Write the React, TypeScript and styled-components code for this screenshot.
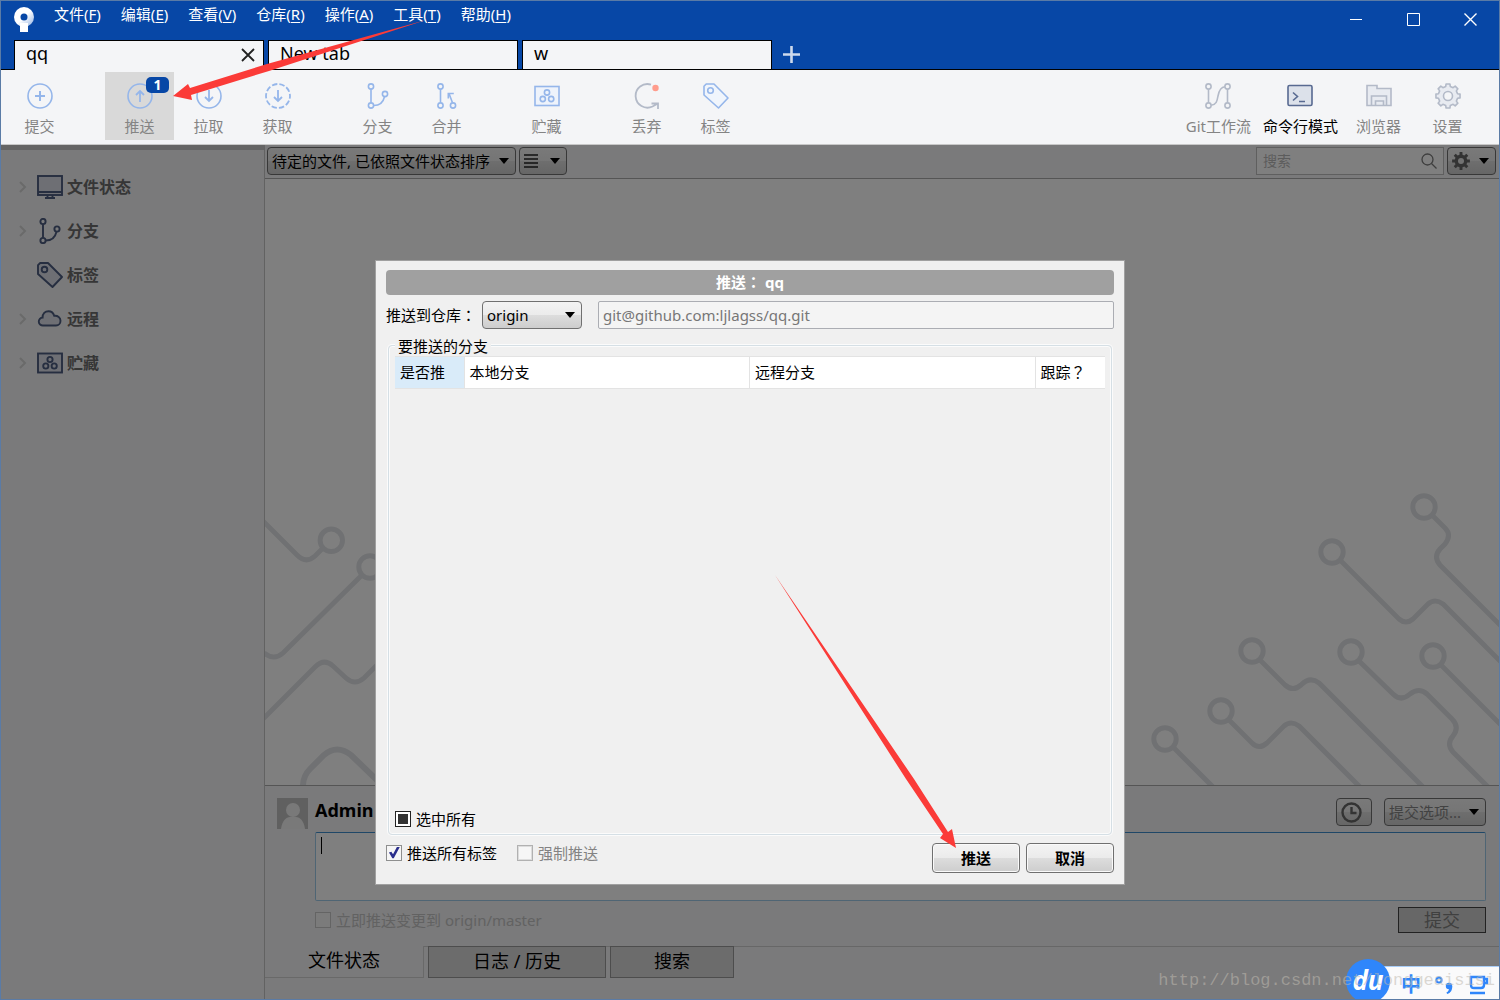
import React, { useEffect, useRef } from "react";
import styled, { createGlobalStyle, css } from "styled-components";

const UI_FONT = `"Noto Sans", "Noto Sans CJK SC", sans-serif`;
const BLUE = "#0747a6";
const PANEL = "#f4f5f7";
const bevel = "linear-gradient(#f3f3f3 0%, #ebebeb 50%, #dddddd 50%, #cdcdcd 100%)";

const GlobalStyle = createGlobalStyle`
  *, *::before, *::after { box-sizing: border-box; }
  body { margin: 0; font-family: ${UI_FONT}; font-size: 15px; line-height: 20px; color: #000; }
  button, input, select, textarea { font: inherit; color: inherit; margin: 0; }
  button { padding: 0; border: 0; background: none; }
  svg { display: block; flex: none; }
`;

const Window = styled.div`
  position: relative;
  display: flex;
  flex-direction: column;
  min-height: 100vh;
  border: 1px solid #5a7ba6;
  background: ${PANEL};
  overflow: hidden;
`;

/* ---------- title bar ---------- */

const TitleBar = styled.header`
  background: ${BLUE};
  color: #fff;
`;

const TitleRow = styled.div`
  display: flex;
  align-items: flex-start;
  height: 39px;
  padding-left: 12px;
`;

const LogoBox = styled.div`
  width: 41px;
  padding-top: 5px;
`;

const MenuBar = styled.nav`
  display: flex;
  flex: 1;
  gap: 20px;
  padding-top: 3px;
`;

const MenuButton = styled.button`
  line-height: 20px;
  white-space: nowrap;
  u { text-underline-offset: 2px; }
`;

const WindowButton = styled.button`
  display: grid;
  place-items: center;
  width: 57px;
  height: 36px;
`;

const TabRow = styled.div`
  display: flex;
  gap: 4px;
  height: 30px;
  padding-left: 13px;
  border-bottom: 1px solid #000;
`;

const Tab = styled.div<{ $active?: boolean }>`
  display: flex;
  align-items: flex-start;
  justify-content: space-between;
  width: 250px;
  margin-bottom: ${(p) => (p.$active ? "-1px" : "0")};
  padding: 0 8px 0 11px;
  border: 1px solid #000;
  border-bottom: 0;
  background: ${PANEL};
  color: #000;
`;

const TabLabel = styled.button`
  font-size: 18px;
  line-height: 24px;
`;

const TabClose = styled.button`
  display: grid;
  place-items: center;
  width: 14px;
  height: 28px;
`;

const AddTab = styled.button`
  display: grid;
  place-items: center;
  width: 30px;
`;

/* ---------- toolbar ---------- */

const Toolbar = styled.div`
  display: flex;
  justify-content: space-between;
  padding: 2px 17px 4px 4px;
  border-bottom: 1px solid #c8c8c8;
  background: ${PANEL};
`;

const ToolSections = styled.div`
  display: flex;
  gap: 31px;
`;

const ToolGroup = styled.div`
  display: flex;
`;

const ToolButton = styled.button<{ $hot?: boolean; $strong?: boolean }>`
  position: relative;
  display: flex;
  flex-direction: column;
  align-items: center;
  gap: 7px;
  min-width: 69px;
  padding: 11px 6px 4px;
  background: ${(p) => (p.$hot ? "#d9d9d9" : "transparent")};
  color: ${(p) => (p.$strong ? "#000" : "#848484")};
  white-space: nowrap;
`;

const Badge = styled.span`
  position: absolute;
  top: 5px;
  right: 5px;
  width: 23px;
  border-radius: 5px;
  background: ${BLUE};
  color: #fff;
  font-size: 14px;
  font-weight: 700;
  line-height: 16px;
  text-align: center;
`;

/* ---------- body ---------- */

const Body = styled.div`
  position: relative;
  display: flex;
  flex: 1;
`;

const Sidebar = styled.aside`
  width: 264px;
  padding-top: 15px;
  border-top: 5px solid #cacaca;
  border-right: 1px solid #c4c4c4;
`;

const SideItem = styled.button`
  display: flex;
  align-items: center;
  width: 100%;
  height: 44px;
  padding-left: 17px;
  color: #6c6c6c;
  font-size: 16px;
  font-weight: 700;
`;

const SideArrow = styled.span<{ $hidden?: boolean }>`
  width: 19px;
  visibility: ${(p) => (p.$hidden ? "hidden" : "visible")};
`;

const SideIcon = styled.span`
  width: 30px;
`;

const Main = styled.main`
  display: flex;
  flex: 1;
  flex-direction: column;
  min-width: 0;
`;

const FilterBar = styled.div`
  display: flex;
  align-items: flex-start;
  gap: 3px;
  height: 34px;
  padding: 2px 3px 0 2px;
  border-bottom: 1px solid #ababab;
`;

const Spacer = styled.div`
  flex: 1;
`;

const SelectBox = styled.div<{ $width: number; $muted?: boolean }>`
  display: grid;
  align-items: center;
  width: ${(p) => p.$width}px;
  color: ${(p) => (p.$muted ? "#858585" : "#000")};
  & > * { grid-area: 1 / 1; }
  & > svg { justify-self: end; margin-right: 7px; pointer-events: none; }
`;

const Select = styled.select`
  width: 100%;
  height: 28px;
  padding: 0 4px;
  border: 1px solid #707070;
  border-radius: 4px;
  background: ${bevel};
  appearance: none;
`;

const SmallButton = styled.button<{ $width: number }>`
  display: flex;
  align-items: center;
  justify-content: space-between;
  width: ${(p) => p.$width}px;
  height: 28px;
  padding: 0 6px 0 4px;
  border: 1px solid #707070;
  border-radius: 4px;
  background: ${bevel};
`;

const SearchBox = styled.label`
  display: flex;
  align-items: center;
  width: 188px;
  height: 28px;
  padding: 0 6px;
  border: 1px solid #bebebe;
  background: #fff;
`;

const SearchInput = styled.input`
  flex: 1;
  min-width: 0;
  padding: 0;
  border: 0;
  outline: 0;
  background: none;
  font-size: 14px;
  &::placeholder { color: #b8b8b8; opacity: 1; }
`;

const Canvas = styled.section`
  display: flex;
  flex: 1;
  align-items: flex-end;
  justify-content: space-between;
  background: #fff;
  overflow: hidden;
`;

const CommitPanel = styled.form`
  display: grid;
  grid-template-columns: 31px 1fr;
  column-gap: 7px;
  padding: 12px 13px 13px 12px;
  border-top: 1px solid #ababab;
`;

const CommitColumn = styled.div`
  display: flex;
  flex-direction: column;
  gap: 6px;
`;

const CommitHeader = styled.div`
  display: flex;
  align-items: flex-start;
  gap: 12px;
`;

const Author = styled.strong`
  flex: 1;
  font-size: 18px;
  line-height: 24px;
`;

const MessageWrap = styled.div`
  position: relative;
  display: flex;
`;

const Message = styled.textarea`
  width: 100%;
  height: 69px;
  padding: 2px 5px;
  border: 1px solid #9fcbe8;
  border-top-color: #3f8fce;
  border-radius: 2px;
  background: #fff;
  resize: none;
  outline: 0;
`;

const Caret = styled.i`
  position: absolute;
  left: 6px;
  top: 5px;
  width: 1px;
  height: 17px;
  background: #000;
`;

const CommitFooter = styled.div`
  display: flex;
  align-items: center;
  justify-content: space-between;
`;

const SubmitButton = styled.button`
  width: 88px;
  height: 26px;
  border: 1px solid #444;
  background: #cfcfcf;
  color: #808080;
  font-size: 18px;
`;

const ViewTabs = styled.div`
  display: flex;
  gap: 4px;
  height: 32px;
  margin-bottom: 21px;
  border-top: 1px solid #cfcfcf;
`;

const ViewTab = styled.button<{ $width: number; $active?: boolean }>`
  width: ${(p) => p.$width}px;
  margin-top: -1px;
  font-size: 18px;
  line-height: 24px;
  ${(p) =>
    p.$active
      ? css`
          padding-bottom: 4px;
          border: solid #d2d2d2;
          border-width: 0 1px 1px 0;
          background: ${PANEL};
        `
      : css`
          padding-bottom: 2px;
          border: 1px solid #9a9a9a;
          background: #d8d8d8;
        `}
`;

/* ---------- dialog ---------- */

const Shade = styled.div`
  position: absolute;
  inset: 0;
  display: grid;
  place-items: center;
  background: rgba(0, 0, 0, 0.5);
`;

const Dialog = styled.section`
  display: flex;
  flex-direction: column;
  width: 750px;
  max-width: 100%;
  padding: 9px 10px 11px;
  border: 1px solid #a0a0a0;
  background: #f0f0f0;
`;

const DialogTitle = styled.h2`
  margin: 0 0 6px;
  border-radius: 4px;
  background: #a0a0a0;
  color: #fff;
  font-size: 15px;
  font-weight: 700;
  line-height: 25px;
  text-align: center;
`;

/* full-width punctuation centred in its cell */
const Wide = styled.span`
  font-family: "Noto Sans CJK TC", sans-serif;
  line-height: 1;
`;

const RepoRow = styled.div`
  display: flex;
  align-items: center;
  margin-bottom: 8px;
`;

const RepoLabel = styled.label`
  width: 96px;
  white-space: nowrap;
`;

const UrlInput = styled.input`
  flex: 1;
  height: 28px;
  margin-left: 16px;
  padding: 0 4px;
  border: 1px solid #abadb3;
  border-radius: 2px;
  background: #f4f4f4;
  color: #777;
`;

const Branches = styled.fieldset`
  display: flex;
  flex-direction: column;
  min-width: 0;
  margin: 0 2px 8px;
  padding: 1px 6px 5px;
  border: 1px solid #d5dfe5;
  border-radius: 4px;
  box-shadow: 0 0 0 1px #fbfbfb, inset 0 0 0 1px #fbfbfb;
`;

const Legend = styled.legend`
  padding: 0 3px;
  background: #f0f0f0;
  line-height: 18px;
`;

const TableArea = styled.div`
  height: 453px;
`;

const Table = styled.table`
  width: 100%;
  border-collapse: collapse;
  table-layout: fixed;
`;

const HeadCell = styled.th<{ $width?: number; $selected?: boolean }>`
  width: ${(p) => (p.$width ? `${p.$width}px` : "auto")};
  height: 32px;
  padding: 0 5px;
  border: solid #e3e3e3;
  border-width: 1px 1px 1px 0;
  background: ${(p) => (p.$selected ? "#d9ebf9" : "#fff")};
  font-weight: 400;
  text-align: left;
  white-space: nowrap;
  &:last-child { border-right: 0; }
`;

const CheckLabel = styled.label<{ $muted?: boolean; $faint?: boolean }>`
  display: inline-flex;
  align-items: center;
  gap: 5px;
  color: ${(p) => (p.$faint ? "#c4c4c4" : p.$muted ? "#838383" : "#000")};
`;

const Check = styled.input<{ $edge: string }>`
  display: grid;
  place-items: center;
  width: 16px;
  height: 16px;
  border: 1px solid ${(p) => p.$edge};
  background: #f6f6f6;
  appearance: none;
  &:checked::before {
    content: "";
    width: 12px;
    height: 12px;
    background: #2b2f8c;
    clip-path: polygon(8% 50%, 28% 44%, 42% 64%, 74% 4%, 98% 4%, 48% 98%, 36% 98%);
  }
  &:disabled { box-shadow: inset 0 0 0 1px #dcdcdc; }
  &:indeterminate { background: #fff; }
  &:indeterminate::before {
    content: "";
    width: 10px;
    height: 10px;
    background: #333;
  }
`;

const DialogFooter = styled.div`
  display: flex;
  align-items: flex-start;
  gap: 6px;
`;

const Options = styled.div`
  display: flex;
  flex: 1;
  gap: 20px;
`;

const DialogButton = styled.button`
  width: 88px;
  height: 30px;
  border: 1px solid #707070;
  border-radius: 4px;
  background: ${bevel};
  box-shadow: inset 0 0 0 1px #fafafa;
  font-weight: 700;
`;

/* ---------- things floating above the window ---------- */

const Arrow = styled.svg<{ $left: string; $top: number }>`
  position: absolute;
  left: ${(p) => p.$left};
  top: ${(p) => p.$top}px;
  fill: #fb3b38;
  pointer-events: none;
`;

const ImeBar = styled.div`
  position: absolute;
  right: -1px;
  bottom: -1px;
  display: flex;
  align-items: center;
  gap: 14px;
  width: 132px;
  height: 34px;
  padding: 2px 12px 0 33px;
  border-top: 1px solid #a9cdf8;
  background: #fafafb;
  color: #2f86fb;
`;

const ImeMode = styled.span`
  font-size: 20px;
  font-weight: 700;
`;

const ImeLogo = styled.span`
  position: absolute;
  left: -22px;
  top: -8px;
  width: 44px;
  height: 44px;
  border-radius: 50%;
  background: #2f86fb;
  color: #fff;
  font-family: "Open Sans", sans-serif;
  font-size: 26px;
  font-style: italic;
  font-weight: 700;
  line-height: 42px;
  text-align: center;
`;

const Watermark = styled.span`
  position: absolute;
  right: 4px;
  bottom: 8px;
  color: rgba(190, 185, 175, 0.55);
  font-family: "Liberation Mono", monospace;
  font-size: 17px;
  line-height: 20px;
`;

/* ---------- icons ---------- */

type Draw = { children: React.ReactNode; color?: string; fill?: string };

const NAVY = "#586a91";
const SIDE = "#4d5c80";
const GREY = "#b3bac8";

const Icon = ({ children, color = "#95b6ea", fill = "none" }: Draw) => (
  <svg
    width="26"
    height="26"
    viewBox="0 0 26 26"
    fill={fill}
    stroke={color}
    strokeWidth={color === SIDE ? 1.9 : 1.6}
    aria-hidden="true"
  >
    {children}
  </svg>
);

const Down = () => (
  <svg width="10" height="6" viewBox="0 0 10 6" aria-hidden="true">
    <path d="M0 0h10L5 6z" fill="#000" />
  </svg>
);

const CommitIcon = () => (
  <Icon><circle cx="13" cy="13" r="12" /><path d="M13 8v10M8 13h10" strokeWidth="2" /></Icon>
);
const PushIcon = () => (
  <Icon><circle cx="13" cy="13" r="12" /><path d="M13 19V8M9 12l4-4 4 4" strokeWidth="1.8" /></Icon>
);
const PullIcon = () => (
  <Icon><circle cx="13" cy="13" r="12" /><path d="M13 7v11M9 14l4 4 4-4" strokeWidth="1.8" /></Icon>
);
const FetchIcon = () => (
  <Icon>
    <circle cx="13" cy="13" r="12" strokeDasharray="5.4 2.14" strokeDashoffset="2.7" strokeWidth="1.8" />
    <path d="M13 7v11M9 14l4 4 4-4" strokeWidth="1.8" />
  </Icon>
);
const BranchIcon = ({ color }: { color?: string }) => (
  <Icon color={color}>
    <circle cx="6" cy="3.5" r="2.6" /><circle cx="6" cy="22.5" r="2.6" /><circle cx="20" cy="11" r="2.6" />
    <path d="M6 6.2v13.6M8.7 22.5c6 0 9.6-3.5 10.8-8.8" />
  </Icon>
);
const MergeIcon = () => (
  <Icon>
    <circle cx="6.500" cy="3.5" r="2.6" /><circle cx="6.500" cy="22.5" r="2.6" /><circle cx="19" cy="22.5" r="2.6" />
    <path d="M6.500 6.2v13.6M18.500 19.800 15 10.500M14.300 15.500v-5h5.500" />
  </Icon>
);
const StashIcon = ({ color, fill }: { color?: string; fill?: string }) => (
  <Icon color={color}>
    <rect x="1" y="3.500" width="24" height="19" fill={fill ?? "#eef3fb"} />
    <circle cx="13" cy="9.500" r="2.600" /><circle cx="8.800" cy="16" r="2.600" /><circle cx="17.200" cy="16" r="2.600" />
  </Icon>
);
const DiscardIcon = () => (
  <Icon color={GREY}>
    <path d="M17 1.600A11.800 11.800 0 1 0 18.500 23.500L24 20.500M17.500 20.500H24V26" strokeWidth="1.8" />
    <circle cx="21.500" cy="5" r="3.200" fill="#ff9c8c" stroke="none" />
  </Icon>
);
const TagIcon = ({ color, fill }: { color?: string; fill?: string }) => (
  <Icon color={color}>
    <path d="M1 3.200 3.200 1H11L25 15l-9.500 10L1 12z" fill={fill ?? "#f0f5fc"} strokeLinejoin="round" />
    <circle cx="7.500" cy="7.500" r="2.800" />
  </Icon>
);
const FlowIcon = () => (
  <Icon color={GREY}>
    <circle cx="3.500" cy="3.500" r="2.600" /><circle cx="3.500" cy="22.500" r="2.600" />
    <circle cx="22.500" cy="3.500" r="2.600" /><circle cx="22.500" cy="22.500" r="2.600" />
    <path d="M3.500 6.100v13.800M22.500 6.100v13.800M6.100 22.300c5.500-.6 6-4.300 6.900-9.300s2.400-9 6.900-9.300" />
  </Icon>
);
const TerminalIcon = () => (
  <Icon color={NAVY}>
    <rect x="1" y="2.500" width="24" height="20" rx="1.500" fill="#dce1ea" />
    <path d="m6 9.500 4.500 4L6 17.500M12 18.500h6" />
  </Icon>
);
const FolderIcon = () => (
  <Icon color={GREY}>
    <path d="M1 22.500V2.500h10v3h14v17z" fill="#e8ebf1" />
    <path d="M5.500 22.500v-9.500h15v9.500M9.500 22.500v-4.500h8v4.500" />
  </Icon>
);

const gearPath = (c: number, outer: number, inner: number, teeth: number) => {
  const step = (Math.PI * 2) / teeth;
  const at = (r: number, a: number) => `${(c + r * Math.cos(a)).toFixed(2)} ${(c + r * Math.sin(a)).toFixed(2)}`;
  return (
    Array.from({ length: teeth }, (_, i) => {
      const a = i * step;
      return `${i ? "L" : "M"}${at(inner, a - step * 0.3)}L${at(outer, a - step * 0.2)}L${at(outer, a + step * 0.2)}L${at(inner, a + step * 0.3)}`;
    }).join("") + "Z"
  );
};

const SettingsIcon = () => (
  <Icon color={GREY}>
    <path d={gearPath(13, 12.2, 9.8, 8)} fill="#e8ebf1" strokeLinejoin="round" />
    <circle cx="13" cy="13" r="4.500" fill={PANEL} />
  </Icon>
);
const SolidGear = () => (
  <svg width="18" height="18" viewBox="0 0 18 18" aria-hidden="true">
    <path d={gearPath(9, 9, 6.4, 8)} fill="#666" />
    <circle cx="9" cy="9" r="3" fill="#e4e4e4" />
  </svg>
);
const MonitorIcon = () => (
  <Icon color={SIDE}>
    <rect x="1" y="2" width="24" height="19" fill="#dcdfe8" /><path d="M1 18h24M10.500 21v3M15.500 21v3M8 24h10" />
  </Icon>
);
const CloudIcon = () => (
  <Icon color={SIDE}>
    <path d="M6 19.500a4 4 0 0 1-.4-8c-.2-4 2.500-6.300 5.900-6.300 3.200 0 5 2 5.700 4.600 3.600-.4 6.300 1.700 6.300 4.900 0 2.800-1.900 4.800-4.500 4.800z" fill="#dcdfe8" />
  </Icon>
);
const Chevron = () => (
  <svg width="10" height="12" viewBox="0 0 10 12" fill="none" stroke="#d4d4d4" strokeWidth="2" aria-hidden="true">
    <path d="m2 1 5 5-5 5" />
  </svg>
);

/* ---------- data ---------- */

const menus = [["文件", "F"], ["编辑", "E"], ["查看", "V"], ["仓库", "R"], ["操作", "A"], ["工具", "T"], ["帮助", "H"]];

type Tool = { label: string; icon: React.ReactNode; badge?: number; strong?: boolean };

const leftTools: Tool[][] = [
  [{ label: "提交", icon: <CommitIcon /> }],
  [
    { label: "推送", icon: <PushIcon />, badge: 1 },
    { label: "拉取", icon: <PullIcon /> },
    { label: "获取", icon: <FetchIcon /> },
  ],
  [{ label: "分支", icon: <BranchIcon /> }, { label: "合并", icon: <MergeIcon /> }],
  [{ label: "贮藏", icon: <StashIcon /> }],
  [{ label: "丢弃", icon: <DiscardIcon /> }, { label: "标签", icon: <TagIcon /> }],
];

const rightTools: Tool[] = [
  { label: "Git工作流", icon: <FlowIcon /> },
  { label: "命令行模式", icon: <TerminalIcon />, strong: true },
  { label: "浏览器", icon: <FolderIcon /> },
  { label: "设置", icon: <SettingsIcon /> },
];

const sections = [
  { label: "文件状态", icon: <MonitorIcon /> },
  { label: "分支", icon: <BranchIcon color={SIDE} /> },
  { label: "标签", icon: <TagIcon color={SIDE} fill="#dcdfe8" />, flat: true },
  { label: "远程", icon: <CloudIcon /> },
  { label: "贮藏", icon: <StashIcon color={SIDE} fill="#dcdfe8" /> },
];

const Tools = ({ items }: { items: Tool[] }) => (
  <ToolGroup>
    {items.map((t) => (
      <ToolButton key={t.label} type="button" $hot={!!t.badge} $strong={t.strong}>
        {t.icon}
        {t.label}
        {t.badge && <Badge>{t.badge}</Badge>}
      </ToolButton>
    ))}
  </ToolGroup>
);

const LeftCircuit = () => (
  <svg width="150" height="285" viewBox="0 0 150 285" fill="none" stroke="#e1e3e6" strokeWidth="5" aria-hidden="true">
    <circle cx="66.300" cy="40.300" r="11.200" />
    <circle cx="105" cy="67" r="11.200" />
    <path d="M-2 21 32 55Q41 64 50 56L58 48M97 75 18 153Q9 161-1 153M-2 219 50 167Q59 158 68 166L81 178Q90 186 99 178L125 152" />
    <path d="M38 286Q38 276 45 269L59 255Q72 244 86 255L117 285" strokeWidth="6" />
  </svg>
);

const RightCircuit = () => (
  <svg width="379" height="305" viewBox="1 0 379 305" fill="none" stroke="#e1e3e6" strokeWidth="5" aria-hidden="true">
    {[[305, 27], [213, 72], [133, 171], [232, 172], [314, 176], [102, 231], [46, 259]].map(([x, y]) => (
      <circle key={x} cx={x} cy={y} r="11.200" />
    ))}
    <path d="M313 35 326 48Q333 55 326 64L321 69Q314 77 321 85L382 146" />
    <path d="M221 80 280 139Q287 145 294 139L309 124Q316 118 324 124L382 182" />
    <path d="M141 180 166 205Q174 212 182 205Q191 196 200 203L304 307" />
    <path d="M240 181 274 214Q282 222 291 214Q300 207 308 214L333 239Q341 247 334 256Q327 264 334 272L369 307" />
    <path d="M322 185 382 245M110 240 133 263Q140 270 148 263L165 246Q172 240 180 246L241 307M54 267 94 307" />
  </svg>
);

export default function App() {
  const all = useRef<HTMLInputElement>(null);
  useEffect(() => {
    if (all.current) all.current.indeterminate = true;
  }, []);

  return (
    <Window>
      <GlobalStyle />
      <TitleBar>
        <TitleRow>
          <LogoBox>
            <svg width="22" height="27" viewBox="0 0 22 27" aria-hidden="true">
              <defs>
                <linearGradient id="stem" x1="0" y1="0" x2="1" y2="1">
                  <stop offset=".5" stopColor="#fff" />
                  <stop offset="1" stopColor="#8fb0e2" />
                </linearGradient>
              </defs>
              <circle cx="11" cy="11" r="10" fill="url(#stem)" />
              <path d="M7 17h8v9H7z" fill="#fff" />
              <circle cx="11" cy="11" r="3.500" fill={BLUE} />
            </svg>
          </LogoBox>
          <MenuBar>
            {menus.map(([name, key]) => (
              <MenuButton key={key} type="button">{name}(<u>{key}</u>)</MenuButton>
            ))}
          </MenuBar>
          <WindowButton type="button" aria-label="Minimize">
            <svg width="13" height="13" stroke="#fff"><path d="M0 6.500h12" /></svg>
          </WindowButton>
          <WindowButton type="button" aria-label="Maximize">
            <svg width="13" height="13" stroke="#fff" fill="none"><path d="M.5.5h12v12H.5z" /></svg>
          </WindowButton>
          <WindowButton type="button" aria-label="Close">
            <svg width="13" height="13" stroke="#fff" strokeWidth="1.400"><path d="m.5.5 12 12m0-12-12 12" /></svg>
          </WindowButton>
        </TitleRow>
        <TabRow>
          <Tab $active>
            <TabLabel type="button">qq</TabLabel>
            <TabClose type="button" aria-label="Close tab">
              <svg width="14" height="14" stroke="#222" strokeWidth="1.800"><path d="m1 1 12 12m0-12L1 13" /></svg>
            </TabClose>
          </Tab>
          <Tab><TabLabel type="button">New tab</TabLabel></Tab>
          <Tab><TabLabel type="button">w</TabLabel></Tab>
          <AddTab type="button" aria-label="New tab">
            <svg width="17" height="17" stroke="#cddaed" strokeWidth="2.600"><path d="M8.500 0v17M0 8.500h17" /></svg>
          </AddTab>
        </TabRow>
      </TitleBar>

      <Toolbar>
        <ToolSections>
          {leftTools.map((g) => <Tools key={g[0].label} items={g} />)}
        </ToolSections>
        <Tools items={rightTools} />
      </Toolbar>

      <Body>
        <Sidebar>
          {sections.map((s) => (
            <SideItem key={s.label} type="button">
              <SideArrow $hidden={s.flat}><Chevron /></SideArrow>
              <SideIcon>{s.icon}</SideIcon>
              {s.label}
            </SideItem>
          ))}
        </Sidebar>
        <Main>
          <FilterBar>
            <SelectBox $width={249}>
              <Select aria-label="排序"><option>待定的文件, 已依照文件状态排序</option></Select>
              <Down />
            </SelectBox>
            <SmallButton type="button" $width={48} aria-label="视图">
              <svg width="14" height="14" stroke="#222" strokeWidth="1.500"><path d="M0 1h14M0 5h14M0 9h14M0 13h14" /></svg>
              <Down />
            </SmallButton>
            <Spacer />
            <SearchBox>
              <SearchInput type="text" placeholder="搜索" aria-label="搜索" />
              <svg width="16" height="16" fill="none" stroke="#7c7c7c" strokeWidth="1.300">
                <circle cx="6.500" cy="6.500" r="5.500" /><path d="m10.500 10.500 5 5" />
              </svg>
            </SearchBox>
            <SmallButton type="button" $width={49} aria-label="选项"><SolidGear /><Down /></SmallButton>
          </FilterBar>
          <Canvas>
            <LeftCircuit />
            <RightCircuit />
          </Canvas>
          <CommitPanel onSubmit={(e) => e.preventDefault()}>
            <svg width="31" height="31" viewBox="0 0 31 31" aria-hidden="true">
              <path d="M0 0h31v31H0z" fill="#c0c0c0" />
              <circle cx="16" cy="12" r="7" fill="#f2f2f2" />
              <path d="M4 31c1-8 5-12 9-12h6c4 0 8 4 9 12z" fill="#f2f2f2" />
            </svg>
            <CommitColumn>
              <CommitHeader>
                <Author>Admin</Author>
                <SmallButton type="button" $width={36} aria-label="历史信息">
                  <svg width="21" height="21" fill="none" stroke="#666" strokeWidth="2.400" aria-hidden="true">
                    <circle cx="10.500" cy="10.500" r="9" /><path d="M10.500 5v6h5" />
                  </svg>
                </SmallButton>
                <SelectBox $width={102} $muted>
                  <Select aria-label="提交选项"><option>提交选项...</option></Select>
                  <Down />
                </SelectBox>
              </CommitHeader>
              <MessageWrap>
                <Message aria-label="提交信息" />
                <Caret />
              </MessageWrap>
              <CommitFooter>
                <CheckLabel $faint>
                  <Check type="checkbox" $edge="#c8c8c8" />立即推送变更到 origin/master
                </CheckLabel>
                <SubmitButton type="submit">提交</SubmitButton>
              </CommitFooter>
            </CommitColumn>
          </CommitPanel>
          <ViewTabs>
            <ViewTab type="button" $width={159} $active>文件状态</ViewTab>
            <ViewTab type="button" $width={178}>日志 / 历史</ViewTab>
            <ViewTab type="button" $width={124}>搜索</ViewTab>
          </ViewTabs>
        </Main>

        <Shade>
          <Dialog role="dialog" aria-labelledby="push-title">
            <DialogTitle id="push-title">推送<Wide>：</Wide> qq</DialogTitle>
            <RepoRow>
              <RepoLabel htmlFor="remote">推送到仓库<Wide>：</Wide></RepoLabel>
              <SelectBox $width={100}>
                <Select id="remote"><option>origin</option></Select>
                <Down />
              </SelectBox>
              <UrlInput aria-label="URL" readOnly value="git@github.com:ljlagss/qq.git" />
            </RepoRow>
            <Branches>
              <Legend>要推送的分支</Legend>
              <TableArea>
                <Table>
                  <thead>
                    <tr>
                      <HeadCell $width={69} $selected>是否推</HeadCell>
                      <HeadCell>本地分支</HeadCell>
                      <HeadCell>远程分支</HeadCell>
                      <HeadCell $width={70}>跟踪<Wide>？</Wide></HeadCell>
                    </tr>
                  </thead>
                </Table>
              </TableArea>
              <CheckLabel><Check ref={all} type="checkbox" $edge="#222" />选中所有</CheckLabel>
            </Branches>
            <DialogFooter>
              <Options>
                <CheckLabel><Check type="checkbox" defaultChecked $edge="#8e8f8f" />推送所有标签</CheckLabel>
                <CheckLabel $muted><Check type="checkbox" disabled $edge="#b1b1b1" />强制推送</CheckLabel>
              </Options>
              <DialogButton type="button">推送</DialogButton>
              <DialogButton type="button">取消</DialogButton>
            </DialogFooter>
          </Dialog>
        </Shade>
      </Body>

      <Arrow $left="172px" $top={18} width="255" height="84" aria-hidden="true">
        <path d="M0 77 15 65 17 69 94 45 253 1 96 52 18 76 19 81z" />
      </Arrow>
      <Arrow $left="calc(50% + 25px)" $top={573} width="184" height="278" aria-hidden="true">
        <path d="M0 1 139 205 173 258 177 255 181 274 165 264 168 260 131 205z" />
      </Arrow>

      <ImeBar>
        <ImeLogo>du</ImeLogo>
        <ImeMode>中</ImeMode>
        <svg width="20" height="20" fill="none" stroke="#2f86fb" strokeWidth="2" aria-hidden="true">
          <circle cx="4" cy="5" r="2.600" />
          <circle cx="14" cy="11" r="3.200" fill="#2f86fb" stroke="none" />
          <path d="M17.200 11c.3 4-1.500 7-5 8l-.8-1.500c2-1 2.800-2.500 2.600-5z" fill="#2f86fb" stroke="none" />
        </svg>
        <svg width="20" height="20" fill="none" stroke="#2f86fb" strokeWidth="2.400" aria-hidden="true">
          <path d="M2 2h13v8q0 3-3 3H5q-3 0-3-3zM15 4h3v4h-3M1 18h15" />
        </svg>
      </ImeBar>
      <Watermark>http://blog.csdn.net/longgeaisisi</Watermark>
    </Window>
  );
}
